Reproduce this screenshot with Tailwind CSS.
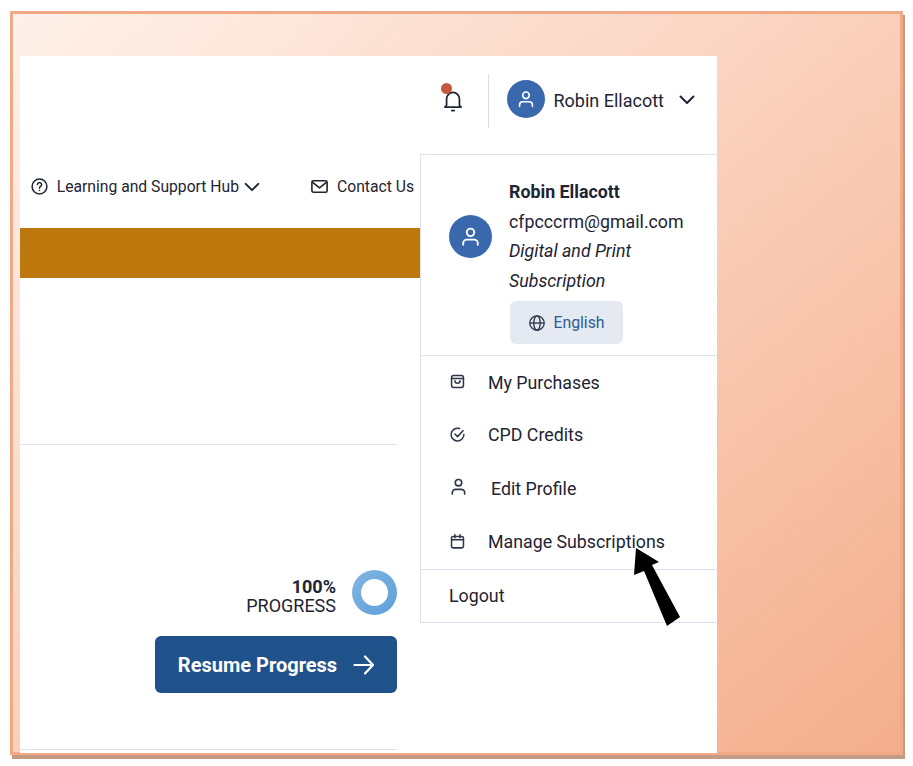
<!DOCTYPE html>
<html lang="en">
<head>
  <meta charset="UTF-8" />
  <title>Account menu</title>
  <script src="https://cdn.jsdelivr.net/npm/@tailwindcss/browser@4"></script>
</head>
<body class="bg-white font-['Roboto',sans-serif] text-[#1e2433]">
  <div class="relative w-[913px] h-[766px] overflow-hidden">
    <!-- frame -->
    <div class="ml-[10px] mt-[11px] w-[893px] h-[744px] border-[3px] border-[#f2aa86] bg-linear-to-br from-[#fef1ea] to-[#f3ae8c] shadow-[2px_4px_0_#c49a85] pl-[7px] pt-[42px]">
      <div class="w-[697px] h-[697px] bg-white flex flex-col">
        <!-- top bar -->
        <header class="h-[98px] shrink-0 flex items-center justify-end pr-[20px] pb-[10px]">
          <div class="relative mr-[21px]">
            <svg class="w-[28px] h-[28px]" viewBox="0 0 24 24" fill="none" stroke="#1e2433" stroke-width="1.5" stroke-linecap="round" stroke-linejoin="round"><path d="M6.5 16.5V11a5.5 5.5 0 0 1 11 0v5.5l1.5 1.5H5z"/><path d="M11 21h2"/></svg>
            <span class="absolute -top-[3px] left-[2px] w-[11px] h-[11px] rounded-full bg-[#c5573f]"></span>
          </div>
          <div class="w-px h-[54px] mt-[2px] bg-[#d6dceb] mr-[18px]"></div>
          <div class="w-[38px] h-[38px] -mt-[2px] rounded-full bg-[#3a68ad] flex items-center justify-center mr-[9px]">
            <svg class="w-[22px] h-[22px]" viewBox="0 0 24 24" fill="none" stroke="#fff" stroke-width="1.8" stroke-linecap="round"><circle cx="12" cy="8" r="3.6"/><path d="M5 20v-1.5A3.5 3.5 0 0 1 8.5 15h7a3.5 3.5 0 0 1 3.5 3.5V20"/></svg>
          </div>
          <span class="text-[18px] mr-[13px]">Robin Ellacott</span>
          <svg class="w-[20px] h-[20px]" viewBox="0 0 20 20" fill="none" stroke="#1e2433" stroke-width="2" stroke-linecap="round" stroke-linejoin="round"><path d="M3.5 6.5 10 13l6.5-6.5"/></svg>
        </header>

        <div class="flex flex-1">
          <!-- page content -->
          <main class="w-[400px] shrink-0 flex flex-col">
            <nav class="h-[74px] shrink-0 flex items-center justify-end pr-[6px] text-[15.7px] pb-[9px]">
              <svg class="w-[19px] h-[19px] mr-[8px]" viewBox="0 0 20 20" fill="none" stroke="#1e2433" stroke-width="1.6" stroke-linecap="round"><circle cx="10" cy="10" r="7.8"/><path d="M7.8 8a2.2 2.2 0 1 1 3.4 1.9c-.8.5-1.2 1-1.2 1.8"/><path d="M10 14.2v.1"/></svg>
              <span>Learning and Support Hub</span>
              <svg class="w-[18px] h-[18px] ml-[4px] mr-[49px]" viewBox="0 0 20 20" fill="none" stroke="#1e2433" stroke-width="2.2" stroke-linecap="round" stroke-linejoin="round"><path d="M3 6.5 10 13.5l7-7"/></svg>
              <svg class="w-[19px] h-[19px] mr-[8px]" viewBox="0 0 20 20" fill="none" stroke="#1e2433" stroke-width="1.7" stroke-linejoin="round"><rect x="2" y="4" width="16" height="12" rx="1.5"/><path d="m2.5 5.5 7.5 6 7.5-6"/></svg>
              <span>Contact Us</span>
            </nav>
            <div class="h-[50px] shrink-0 bg-[#bd780d]"></div>
            <div class="h-[167px] shrink-0 border-b border-[#dfe0ee] mr-[23px]"></div>
            <section class="flex-1 flex flex-col items-end mr-[23px] pt-[125px]">
              <div class="flex items-center">
                <div class="text-right text-[18px] leading-[19px] mr-[16px] mt-[6px]">
                  <div class="font-bold">100%</div>
                  <div>PROGRESS</div>
                </div>
                <div class="w-[45px] h-[45px] rounded-full bg-linear-to-br from-[#82b5e3] to-[#5d9fd8] flex items-center justify-center">
                  <div class="w-[27px] h-[27px] rounded-full bg-white"></div>
                </div>
              </div>
              <button class="mt-[21px] w-[242px] h-[57px] pl-[2px] rounded-[6px] bg-[#1f528b] text-white text-[20px] font-bold flex items-center justify-center gap-[15px]">
                Resume Progress
                <svg class="w-[24px] h-[24px]" viewBox="0 0 24 24" fill="none" stroke="#fff" stroke-width="2.2" stroke-linecap="round" stroke-linejoin="round"><path d="M2.5 12h18M13 3.5l8 8.5-8 8.5"/></svg>
              </button>
              <div class="mt-auto mb-[3px] w-full h-px bg-[#dfe0ee]"></div>
            </section>
          </main>

          <!-- account dropdown -->
          <aside class="w-[297px] self-start border border-r-0 border-[#dfe0ee] text-[17.8px]">
            <div class="h-[201px] flex items-start pl-[28px] pt-[22px] border-b border-[#dfe0ee]">
              <div class="w-[43px] h-[43px] rounded-full bg-[#3a68ad] flex items-center justify-center mt-[38px] mr-[17px] shrink-0">
                <svg class="w-[25px] h-[25px]" viewBox="0 0 24 24" fill="none" stroke="#fff" stroke-width="1.8" stroke-linecap="round"><circle cx="12" cy="8" r="3.6"/><path d="M5 20v-1.5A3.5 3.5 0 0 1 8.5 15h7a3.5 3.5 0 0 1 3.5 3.5V20"/></svg>
              </div>
              <div class="leading-[29.5px]">
                <div class="font-bold">Robin Ellacott</div>
                <div>cfpcccrm@gmail.com</div>
                <div class="italic w-[170px]">Digital and Print Subscription</div>
                <div class="mt-[6px] ml-[1px] w-[113px] h-[43px] rounded-[6px] bg-[#e5e9f1] flex items-center justify-center gap-[7px] text-[15.8px] text-[#2b5c97]">
                  <svg class="w-[18px] h-[18px]" viewBox="0 0 20 20" fill="none" stroke="#2f3648" stroke-width="1.5"><circle cx="10" cy="10" r="8"/><ellipse cx="10" cy="10" rx="3.6" ry="8"/><path d="M2 10h16"/></svg>
                  English
                </div>
              </div>
            </div>
            <ul class="h-[214px] border-b border-[#dfe0ee]">
              <li class="h-[53px] flex items-center pl-[28px] pt-[2px]">
                <svg class="w-[17px] h-[17px] mr-[22px] -mt-[5px]" viewBox="0 0 20 20" fill="none" stroke="#2f3648" stroke-width="1.8" stroke-linejoin="round" stroke-linecap="round"><rect x="3" y="3" width="14" height="14" rx="2.5"/><path d="M3 6.5h14M7 9a3 3 0 0 0 6 0"/></svg>
                My Purchases
              </li>
              <li class="h-[53px] flex items-center pl-[28px]">
                <svg class="w-[17px] h-[17px] mr-[22px] -mt-[3px]" viewBox="0 0 20 20" fill="none" stroke="#2f3648" stroke-width="1.8" stroke-linecap="round" stroke-linejoin="round"><path d="M17.5 10A7.5 7.5 0 1 1 12.5 3"/><path d="m7 9.5 3 3 6.5-7"/></svg>
                CPD Credits
              </li>
              <li class="h-[54px] flex items-center pl-[28px]">
                <svg class="w-[19px] h-[19px] mr-[23px] -mt-[5px]" viewBox="0 0 20 20" fill="none" stroke="#2f3648" stroke-width="1.7" stroke-linecap="round"><circle cx="10" cy="6" r="3.4"/><path d="M3.5 18v-1.5a3.5 3.5 0 0 1 3.5-3.5h6a3.5 3.5 0 0 1 3.5 3.5V18"/></svg>
                Edit Profile
              </li>
              <li class="h-[53px] flex items-center pl-[28px]">
                <svg class="w-[17px] h-[17px] mr-[22px] -mt-[3px]" viewBox="0 0 20 20" fill="none" stroke="#2f3648" stroke-width="1.8" stroke-linecap="round" stroke-linejoin="round"><rect x="3" y="4" width="14" height="13.5" rx="2"/><path d="M3 8h14M7 2v3.5M13 2v3.5"/></svg>
                Manage Subscriptions
              </li>
            </ul>
            <div class="h-[52px] flex items-center pl-[28px]">Logout</div>
          </aside>
        </div>
      </div>
    </div>

    <!-- callout arrow -->
    <svg class="absolute left-[630px] top-[545px] w-[55px] h-[85px]" viewBox="0 0 55 85"><polygon points="6,3 29,17 22,20 50,72 37,81 14,26 4,30" fill="#000"/></svg>
  </div>
</body>
</html>
